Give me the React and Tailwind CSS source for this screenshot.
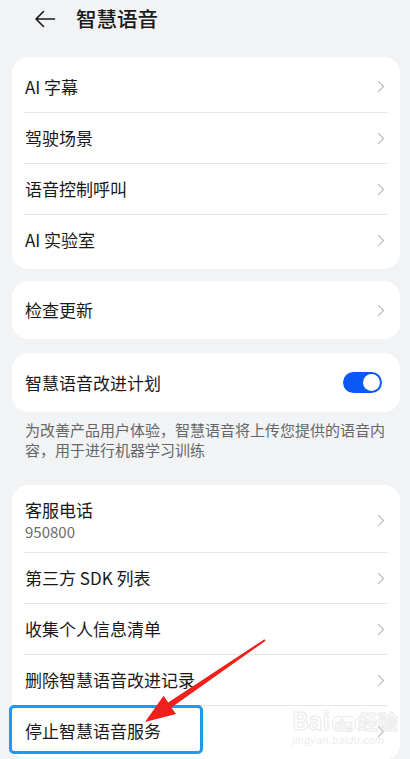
import React from "react";

const Chevron = () => (
  <svg width="8" height="13" viewBox="0 0 8 13" className="shrink-0">
    <path d="M1.5 1.5 L6.5 6.5 L1.5 11.5" fill="none" stroke="#bdbdbd" strokeWidth="1.2" strokeLinecap="round" strokeLinejoin="round" />
  </svg>
);

const Row = ({ label, sub, first, h = "h-[51px]" }) => (
  <div className={`${h} flex items-center justify-between pl-[1px] pr-[3px] ${first ? "" : "border-t border-[#e6e6e6]"}`}>
    <div className="flex flex-col">
      <span className="text-[17px] leading-[22px] text-[#191919]">{label}</span>
      {sub && <span className="text-[15px] leading-[20px] text-[#6b6b6b] mt-[1px]">{sub}</span>}
    </div>
    <Chevron />
  </div>
);

export default function App() {
  return (
    <div
      className="relative w-[410px] h-[759px] overflow-hidden bg-[#f1f3f5]"
      style={{ fontFamily: '"Noto Sans CJK SC", "Noto Sans", sans-serif' }}
    >
      {/* Header */}
      <div className="h-[37px] flex items-center pl-[34px]">
        <svg width="22" height="18" viewBox="0 0 22 18">
          <path d="M20.5 9 H2 M9.5 1.5 L2 9 L9.5 16.5" fill="none" stroke="#1a1a1a" strokeWidth="1.6" strokeLinecap="round" strokeLinejoin="round" />
        </svg>
        <span className="ml-[20px] text-[20.5px] font-medium text-[#191919] leading-none">智慧语音</span>
      </div>

      {/* Card 1 */}
      <div className="mt-[20px] ml-3 mr-[10px] bg-white rounded-[16px] py-1 px-3">
        <Row label="AI 字幕" first />
        <Row label="驾驶场景" />
        <Row label="语音控制呼叫" />
        <Row label="AI 实验室" />
      </div>

      {/* Card 2 */}
      <div className="mt-3 ml-3 mr-[10px] bg-white rounded-[16px] px-3">
        <Row label="检查更新" first h="h-[58px]" />
      </div>

      {/* Card 3 */}
      <div className="mt-[14px] ml-3 mr-[10px] bg-white rounded-[16px] px-3 h-[59px] flex items-center justify-between">
        <span className="pl-[1px] text-[17px] leading-[22px] text-[#191919]">智慧语音改进计划</span>
        <div className="mr-[6px] w-[39px] h-[21px] rounded-full bg-[#0a59f7] flex items-center justify-end pr-[2px]">
          <div className="w-[17px] h-[17px] rounded-full bg-white" />
        </div>
      </div>
      <p className="pl-[25px] pr-[22px] pt-2 text-[15px] leading-[20px] text-[#666666]">
        为改善产品用户体验，智慧语音将上传您提供的语音内容，用于进行机器学习训练
      </p>

      {/* Card 4 */}
      <div className="mt-[25px] ml-3 mr-[10px] bg-white rounded-[16px] pt-1 px-3 pb-1">
        <Row label="客服电话" sub="950800" first h="h-[63px]" />
        <Row label="第三方 SDK 列表" />
        <Row label="收集个人信息清单" />
        <Row label="删除智慧语音改进记录" />
        <Row label="停止智慧语音服务" />
      </div>

      {/* Highlight box */}
      <div className="absolute left-[9px] top-[705px] w-[194px] h-[49px] border-[3px] border-[#1d9bf2] rounded-[5px]" />

      {/* Watermark */}
      <div className="absolute left-[292px] top-[708px] flex flex-col items-start pointer-events-none select-none opacity-70">
        <div className="flex items-end gap-[2px] leading-none">
          <span className="text-[24px] font-bold text-transparent" style={{ WebkitTextStroke: "1px #e2e2e2" }}>Bai</span>
          <span className="text-[14px] font-bold text-transparent rounded-[6px] px-[2px] border border-[#e2e2e2]" style={{ WebkitTextStroke: "1px #e2e2e2" }}>du</span>
          <span className="text-[20px] font-bold text-transparent" style={{ WebkitTextStroke: "1px #e2e2e2" }}>经验</span>
        </div>
        <span className="text-[10px] italic text-[#e6e6e6] leading-[14px] mt-[2px]" style={{ fontFamily: '"DejaVu Sans", sans-serif' }}>jingyan.baidu.com</span>
      </div>

      {/* Red arrow */}
      <svg className="absolute left-0 top-0 pointer-events-none" width="410" height="759" viewBox="0 0 410 759">
        <polygon
          points="264.4,639.2 168.2,702.6 163.6,695.8 145,722 176,714 171.4,707.4 265.6,640.8"
          fill="#f0201c"
        />
      </svg>
    </div>
  );
}
